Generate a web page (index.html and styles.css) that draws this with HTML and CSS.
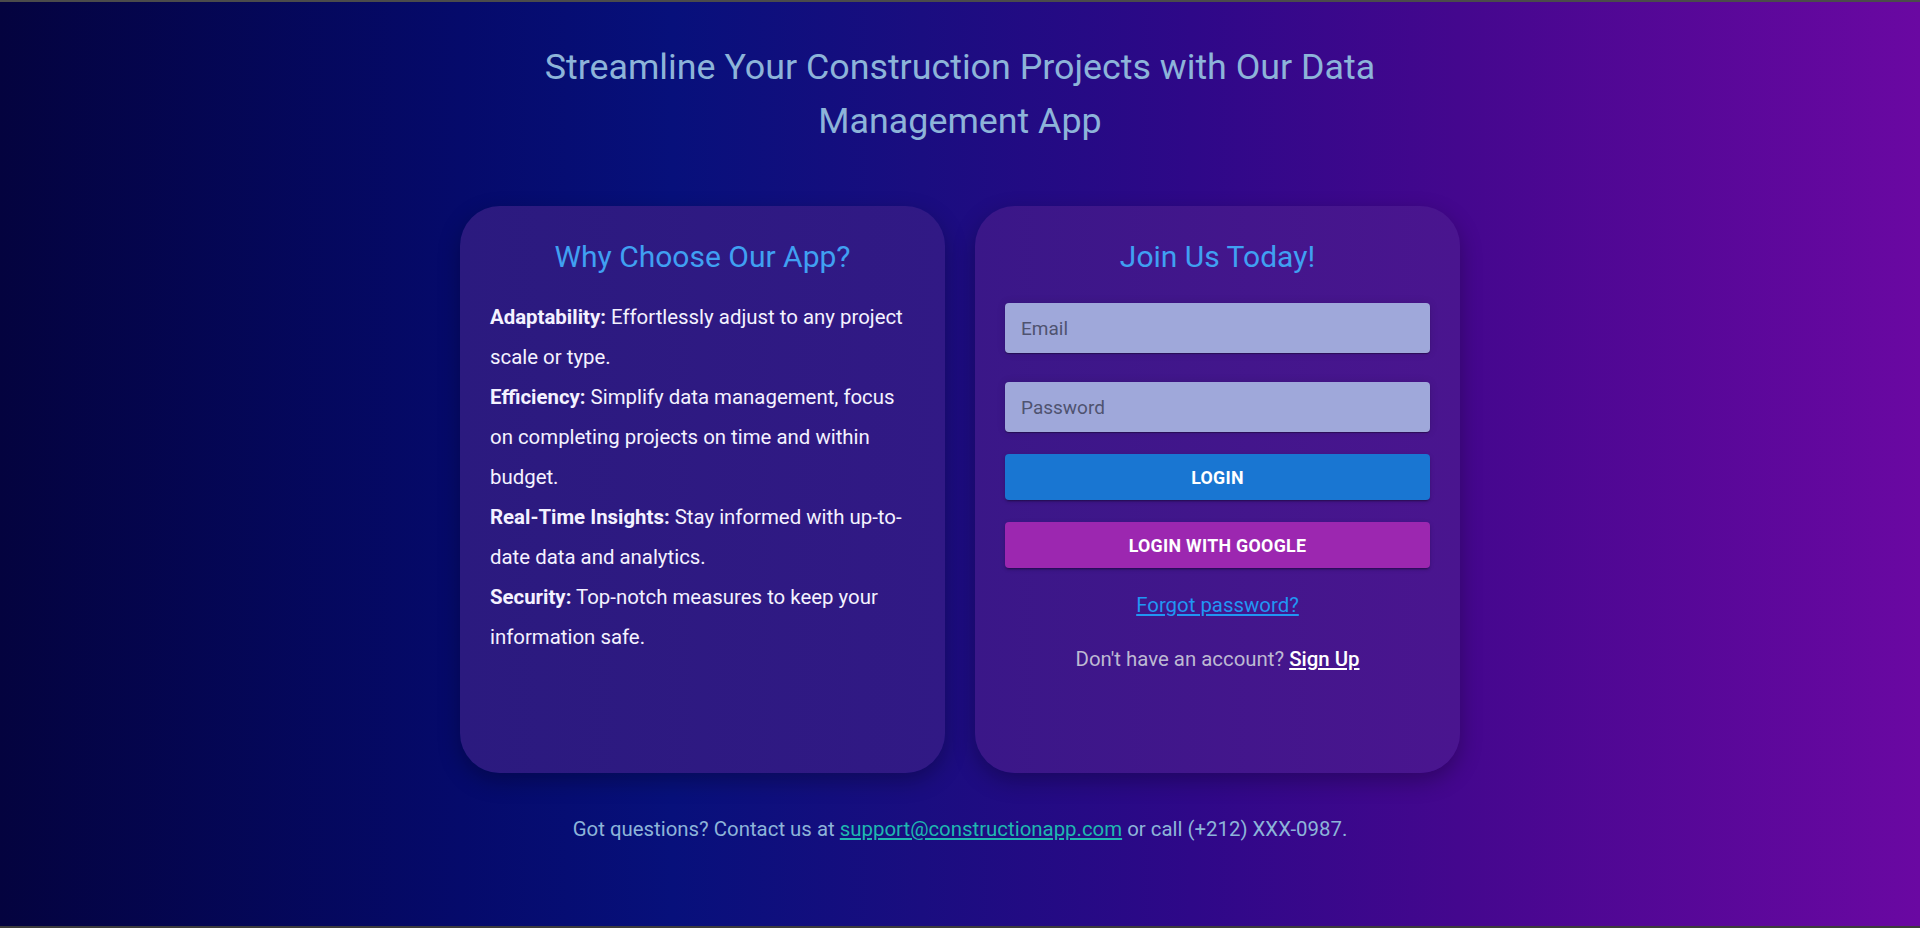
FILE: index.html
```html
<!DOCTYPE html>
<html lang="en">
<head>
<meta charset="utf-8">
<title>Construction Data Management</title>
<link rel="stylesheet" href="styles.css">
</head>
<body>
<div class="page">
  <h1 class="hero-title">Streamline Your Construction Projects with Our Data Management App</h1>
  <div class="cards">
    <section class="card card-info">
      <h2 class="card-title">Why Choose Our App?</h2>
      <p class="feature"><strong>Adaptability:</strong> Effortlessly adjust to any project scale or type.</p>
      <p class="feature"><strong>Efficiency:</strong> Simplify data management, focus on completing projects on time and within budget.</p>
      <p class="feature"><strong>Real-Time Insights:</strong> Stay informed with up-to-date data and analytics.</p>
      <p class="feature"><strong>Security:</strong> Top-notch measures to keep your information safe.</p>
    </section>
    <section class="card card-join">
      <h2 class="card-title">Join Us Today!</h2>
      <form class="login-form">
        <input class="field" type="email" placeholder="Email">
        <input class="field" type="password" placeholder="Password">
        <button type="button" class="btn btn-primary">Login</button>
        <button type="button" class="btn btn-google">Login with Google</button>
      </form>
      <a class="forgot" href="#">Forgot password?</a>
      <p class="signup">Don't have an account? <a href="#">Sign Up</a></p>
    </section>
  </div>
  <p class="contact">Got questions? Contact us at <a href="#">support@constructionapp.com</a> or call (+212) XXX-0987.</p>
</div>
</body>
</html>
```
FILE: styles.css
```css
* { box-sizing: border-box; }

html, body {
  margin: 0;
  padding: 0;
}

body {
  height: 928px;
  overflow: hidden;
  font-family: Roboto, "Noto Sans", "Liberation Sans", sans-serif;
  background: linear-gradient(90deg, #04033f 0%, #050a6b 24%, #07107b 35%, #1a0d80 48%, #2e0888 62%, #44078e 76%, #6a08a2 100%);
  border-top: 2px solid #4b4b4b;
  border-bottom: 2px solid #3c3c3c;
}

.page {
  display: flex;
  flex-direction: column;
  align-items: center;
  padding-top: 38px;
}

.hero-title {
  margin: 0;
  max-width: 900px;
  text-align: center;
  font-size: 35.8px;
  line-height: 54px;
  font-weight: 400;
  color: #8db4d9;
}

.cards {
  display: grid;
  grid-template-columns: 485px 485px;
  gap: 30px;
  margin-top: 58px;
}

.card {
  min-height: 567px;
  border-radius: 40px;
  padding: 31px 30px 30px;
  box-shadow: 0 8px 22px rgba(0, 0, 0, 0.28);
}

.card-info {
  background: linear-gradient(90deg, #2b1a7f, #311985);
}

.card-join {
  background: linear-gradient(90deg, #3a1788, #4a158f);
  text-align: center;
}

.card-title {
  margin: 0 0 20px;
  text-align: center;
  font-size: 30px;
  line-height: 40px;
  font-weight: 400;
  color: #40a0f2;
}

.feature {
  margin: 0;
  font-size: 20.4px;
  line-height: 40px;
  color: #f4f2ff;
}

.feature strong {
  font-weight: 700;
}

.login-form {
  display: flex;
  flex-direction: column;
  margin-top: 26px;
}

.field {
  height: 50px;
  border: none;
  border-radius: 4px;
  background: #9fa8da;
  padding: 0 16px;
  font-family: inherit;
  font-size: 19px;
  color: #2c2f45;
  box-shadow: 0 0 8px rgba(0, 0, 0, 0.12), 0 1px 1px rgba(0, 0, 0, 0.35);
  outline: none;
}

.field + .field {
  margin-top: 29px;
}

.field::placeholder {
  color: #4f5370;
}

.btn {
  height: 46px;
  border: none;
  border-radius: 4px;
  font-family: inherit;
  font-size: 17.8px;
  font-weight: 700;
  letter-spacing: 0.3px;
  text-transform: uppercase;
  color: #fff;
  box-shadow: 0 3px 1px -2px rgba(0,0,0,.2), 0 2px 2px 0 rgba(0,0,0,.14), 0 1px 5px 0 rgba(0,0,0,.12);
  cursor: pointer;
}

.btn-primary {
  margin-top: 22px;
  background: #1976d2;
}

.btn-google {
  margin-top: 22px;
  background: #9c27b0;
}

.forgot {
  display: inline-block;
  margin-top: 25px;
  font-size: 20.4px;
  line-height: 24px;
  color: #2196f3;
  text-decoration: underline;
}

.signup {
  margin: 30px 0 0;
  font-size: 20.4px;
  line-height: 24px;
  color: #bdb9d3;
}

.signup a {
  color: #fff;
  font-weight: 500;
  text-decoration: underline;
}

.contact {
  margin: 44px 0 0;
  font-size: 20.4px;
  line-height: 24px;
  color: #8db4d9;
}

.contact a {
  color: #1fb8b0;
  text-decoration: underline;
}
```
